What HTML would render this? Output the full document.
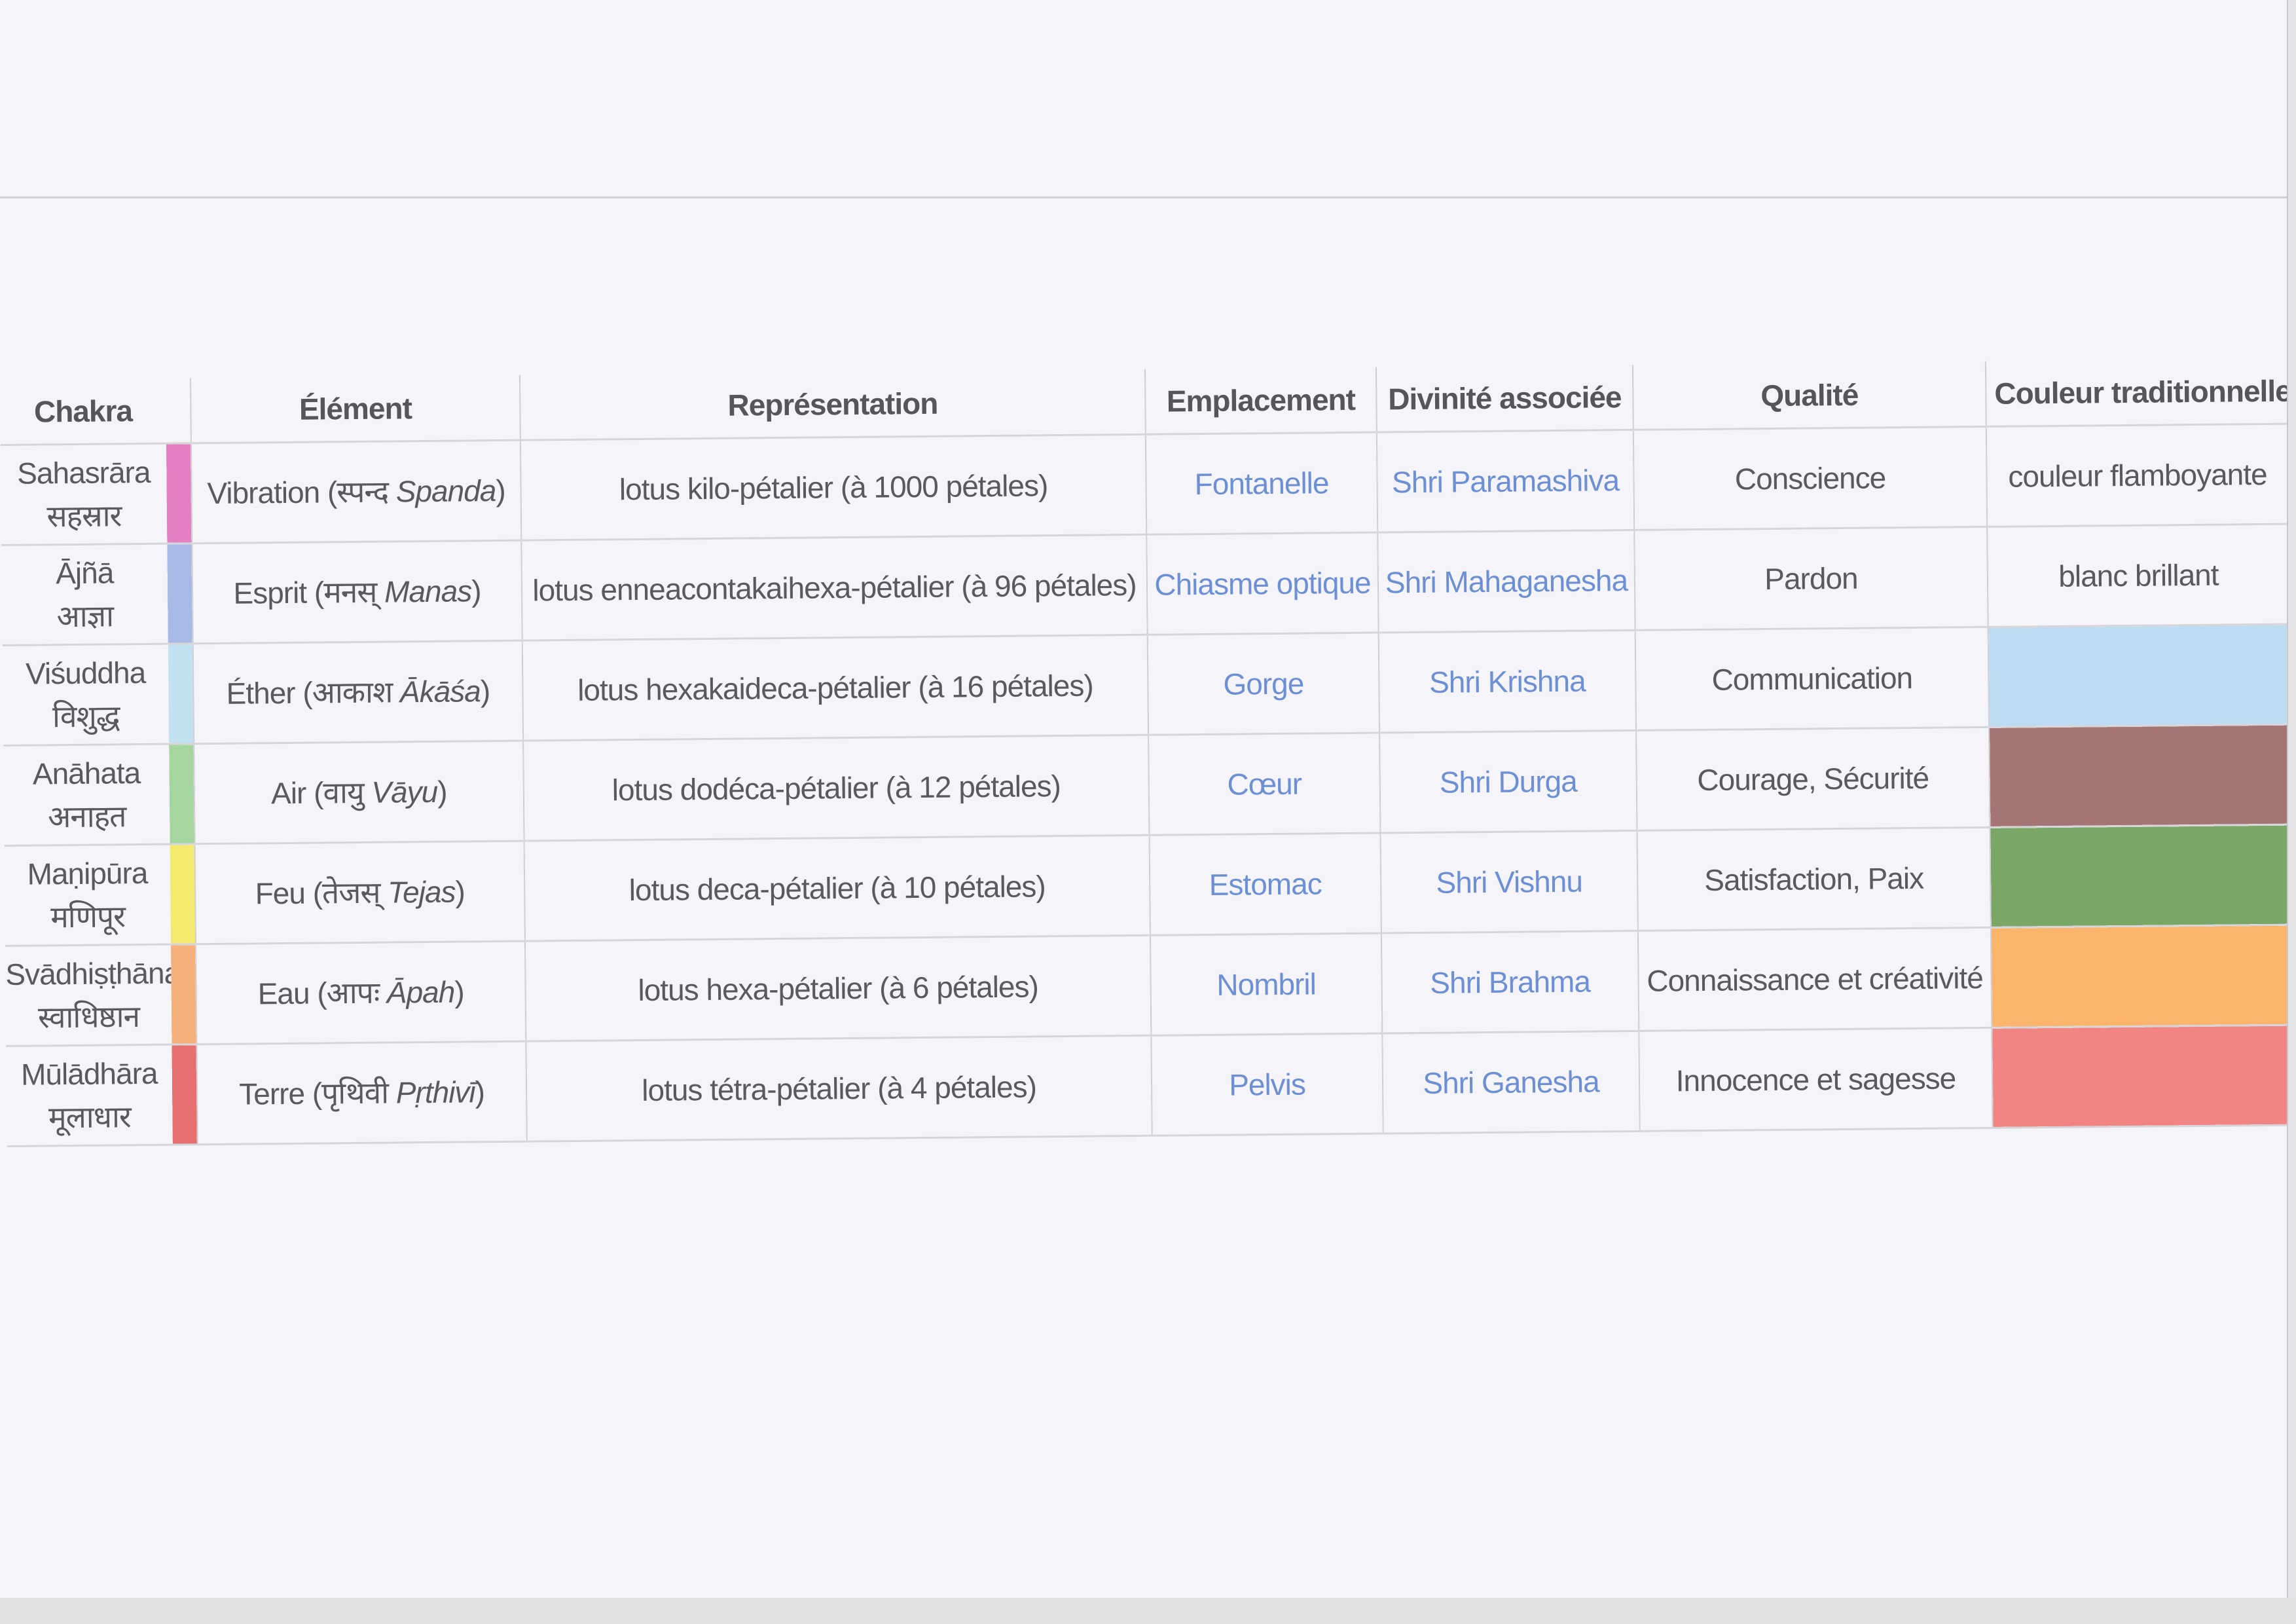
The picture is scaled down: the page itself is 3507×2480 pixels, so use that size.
<!DOCTYPE html>
<html><head><meta charset="utf-8"><style>
html,body{margin:0;padding:0}
body{width:3507px;height:2480px;background:#f5f5f9;position:relative;overflow:hidden;font-family:"Liberation Sans","Noto Sans CJK SC",sans-serif;color:#5a5a5e}
.topline{position:absolute;left:0;top:300px;width:3493px;height:3px;background:#cfcfd4}
.rstrip{position:absolute;left:3493px;top:0;width:14px;height:2480px;background:#e4e4e6;border-left:2px solid #c8c8cc}
.bstrip{position:absolute;left:0;top:2440px;width:3507px;height:40px;background:#e2e2e4}
.wrap{position:absolute;left:0;top:580px;transform-origin:0 0;transform:rotate(-0.53deg)}
table{border-collapse:collapse;table-layout:fixed;width:3493px}
td,th{text-align:center;font-size:46px;letter-spacing:-1px;padding:0;border-bottom:3px solid #d6d6da;border-left:2px solid #d0d0d4;line-height:66px;white-space:nowrap;overflow:hidden}
th{font-weight:bold;height:98px;border-bottom:3px solid #d6d6da;color:#55555a}
td:first-child,th:first-child{border-left:none}
td.bar{border-left:none;padding:0}
a{color:#6d8fd4;text-decoration:none}
tr.r td{height:150px}
.c0{width:253px}.c1{width:38px}.c2{width:503px}.c3{width:955px}.c4{width:353px}.c5{width:392px}.c6{width:539px}.c7{width:460px}
</style></head><body>
<div class="topline"></div>
<div class="wrap">
<table>
<colgroup><col class="c0"><col class="c1"><col class="c2"><col class="c3"><col class="c4"><col class="c5"><col class="c6"><col class="c7"></colgroup>
<tr><th>Chakra</th><th style="border-left:none"></th><th>Élément</th><th>Représentation</th><th>Emplacement</th><th>Divinité associée</th><th>Qualité</th><th style="text-align:left;padding-left:12px">Couleur traditionnelle</th></tr>
<tr class="r"><td>Sahasrāra<br>सहस्रार</td><td class="bar" style="background:#e380c2"></td><td>Vibration (स्पन्द <i>Spanda</i>)</td><td>lotus kilo-pétalier (à 1000 pétales)</td><td><a>Fontanelle</a></td><td><a>Shri Paramashiva</a></td><td>Conscience</td><td>couleur flamboyante</td></tr>
<tr class="r"><td>Ājñā<br>आज्ञा</td><td class="bar" style="background:#a9b9e6"></td><td>Esprit (मनस् <i>Manas</i>)</td><td>lotus enneacontakaihexa-pétalier (à 96 pétales)</td><td><a>Chiasme optique</a></td><td><a>Shri Mahaganesha</a></td><td>Pardon</td><td>blanc brillant</td></tr>
<tr class="r"><td>Viśuddha<br>विशुद्ध</td><td class="bar" style="background:#c2e2f2"></td><td>Éther (आकाश <i>Ākāśa</i>)</td><td>lotus hexakaideca-pétalier (à 16 pétales)</td><td><a>Gorge</a></td><td><a>Shri Krishna</a></td><td>Communication</td><td style="background:#bddcf2"></td></tr>
<tr class="r"><td>Anāhata<br>अनाहत</td><td class="bar" style="background:#a6d6a0"></td><td>Air (वायु <i>Vāyu</i>)</td><td>lotus dodéca-pétalier (à 12 pétales)</td><td><a>Cœur</a></td><td><a>Shri Durga</a></td><td>Courage, Sécurité</td><td style="background:#a57575"></td></tr>
<tr class="r"><td>Maṇipūra<br>मणिपूर</td><td class="bar" style="background:#f4ea70"></td><td>Feu (तेजस् <i>Tejas</i>)</td><td>lotus deca-pétalier (à 10 pétales)</td><td><a>Estomac</a></td><td><a>Shri Vishnu</a></td><td>Satisfaction, Paix</td><td style="background:#7ba766"></td></tr>
<tr class="r"><td>Svādhiṣṭhāna<br>स्वाधिष्ठान</td><td class="bar" style="background:#f6b07c"></td><td>Eau (आपः <i>Āpah</i>)</td><td>lotus hexa-pétalier (à 6 pétales)</td><td><a>Nombril</a></td><td><a>Shri Brahma</a></td><td>Connaissance et créativité</td><td style="background:#fab46c"></td></tr>
<tr class="r"><td>Mūlādhāra<br>मूलाधार</td><td class="bar" style="background:#e66f70"></td><td>Terre (पृथिवी <i>Pṛthivī</i>)</td><td>lotus tétra-pétalier (à 4 pétales)</td><td><a>Pelvis</a></td><td><a>Shri Ganesha</a></td><td>Innocence et sagesse</td><td style="background:#f28584"></td></tr>
</table>
</div>
<div class="rstrip"></div>
<div class="bstrip"></div>
</body></html>
